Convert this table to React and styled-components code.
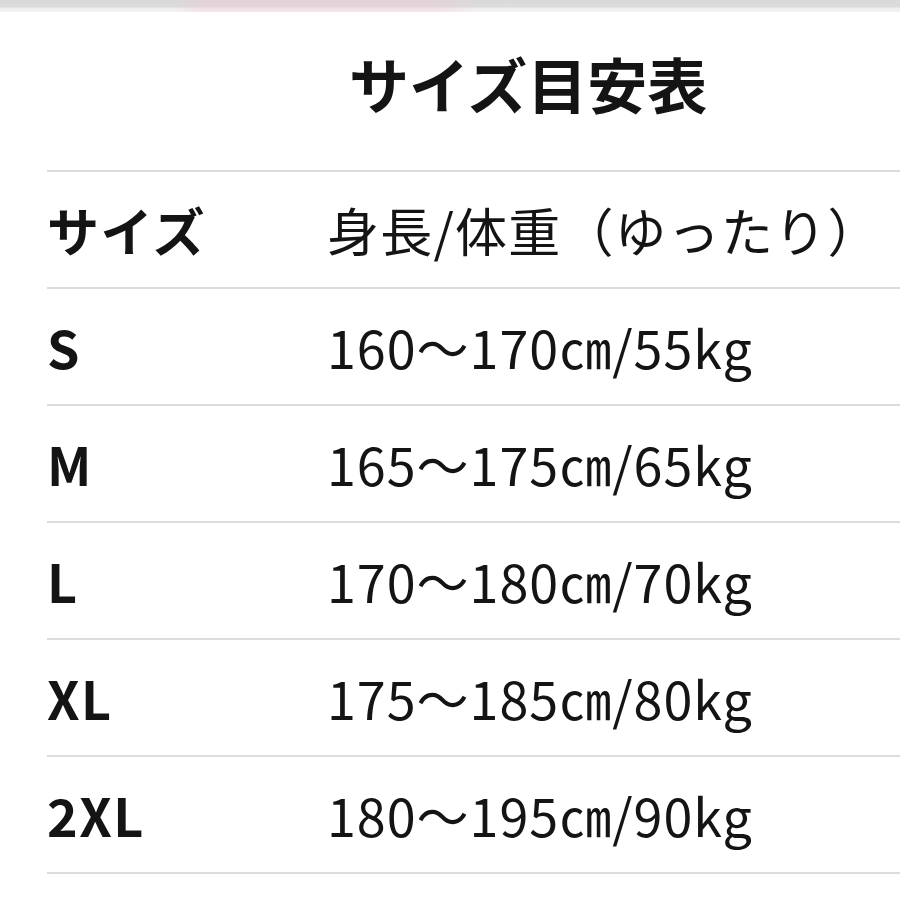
import React from "react";
import styled, { createGlobalStyle } from "styled-components";

const Global = createGlobalStyle`
  html, body { margin: 0; padding: 0; background: #fff; }
  body { font-family: "Noto Sans CJK JP", "Noto Sans", sans-serif; color: #141414; overflow: hidden; }
`;

const Page = styled.div`
  width: 900px;
  height: 900px;
  overflow: hidden;
  background: #fff;
`;

const TopBar = styled.div`
  height: 12px;
  background:
    linear-gradient(90deg, rgba(255,255,255,0) 0px, rgba(255,255,255,0) 170px, rgba(240,200,210,0.35) 200px, rgba(240,200,210,0.35) 440px, rgba(255,255,255,0) 480px),
    linear-gradient(180deg, #d9d9d9 0px, #dcdcdc 7px, #eeeeee 8px, #f4f4f4 12px);
`;

const Title = styled.h1`
  margin: 0;
  height: 158px;
  box-sizing: border-box;
  padding: 41px 0 0 349px;
  font-size: 60px;
  font-weight: 700;
  line-height: 1;
  letter-spacing: 0;
  color: #141414;
`;

const Table = styled.div`
  margin-left: 47px;
  width: 853px;
  border-top: 2px solid #dcdcdc;
`;

const Row = styled.div`
  display: grid;
  grid-template-columns: 280px 1fr;
  align-items: center;
  height: 115px;
  border-bottom: 2px solid #dcdcdc;
`;

const Label = styled.div`
  font-size: 52px;
  font-weight: 700;
  line-height: 1;
  letter-spacing: 1.5px;
  white-space: nowrap;
`;

const Value = styled.div`
  font-size: 52px;
  font-weight: 400;
  line-height: 1;
  letter-spacing: ${(p) => (p.$head ? "1.2px" : "1px")};
  white-space: nowrap;
`;

const rows = [
  ["S", "160〜170㎝/55kg"],
  ["M", "165〜175㎝/65kg"],
  ["L", "170〜180㎝/70kg"],
  ["XL", "175〜185㎝/80kg"],
  ["2XL", "180〜195㎝/90kg"],
];

export default function App() {
  return (
    <Page>
      <Global />
      <TopBar />
      <Title>サイズ目安表</Title>
      <Table>
        <Row>
          <Label>サイズ</Label>
          <Value $head>身長/体重（ゆったり）</Value>
        </Row>
        {rows.map(([s, v]) => (
          <Row key={s}>
            <Label>{s}</Label>
            <Value>{v}</Value>
          </Row>
        ))}
      </Table>
    </Page>
  );
}
